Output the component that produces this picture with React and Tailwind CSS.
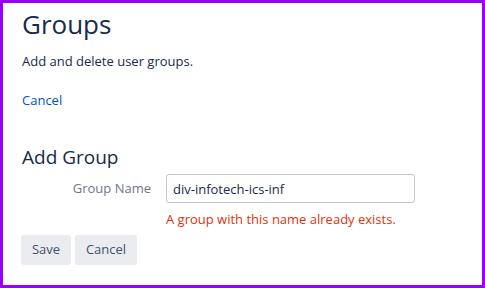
export default function App() {
  const font = { fontFamily: '"Open Sans", "Noto Sans", sans-serif' };
  return (
    <div
      className="w-[485px] h-[288px] border-[3px] border-[#9900ff] bg-white box-border overflow-hidden pl-[19px] text-[#172b4d]"
      style={font}
    >
      <h1 className="text-[26px] leading-[32px] mt-[5px] text-[#172b4d] font-normal">Groups</h1>
      <p className="text-[13px] leading-[20px] mt-[11px]">Add and delete user groups.</p>
      <a className="block text-[13px] leading-[20px] mt-[19px] text-[#0052cc]">Cancel</a>
      <h2 className="text-[19px] leading-[24px] mt-[35px] font-normal">Add Group</h2>
      <div className="flex mt-[5px]">
        <label className="w-[129px] text-right text-[13px] text-[#6b778c] leading-[29px]">Group Name</label>
        <div className="ml-[15px]">
          <input
            className="w-[249px] h-[29px] border border-[#c1c7d0] rounded-[3px] px-[6px] text-[13px] text-[#172b4d] outline-none"
            style={font}
            defaultValue="div-infotech-ics-inf"
            readOnly
          />
          <div className="text-[13px] leading-[20px] mt-[6px] text-[#de350b]">A group with this name already exists.</div>
        </div>
      </div>
      <div className="flex gap-[4px] mt-[6px] -ml-[1px]">
        <button className="h-[30px] w-[50px] bg-[#ebecf0] rounded-[3px] text-[13px] text-[#42526e]" style={font}>Save</button>
        <button className="h-[30px] w-[62px] bg-[#ebecf0] rounded-[3px] text-[13px] text-[#42526e]" style={font}>Cancel</button>
      </div>
    </div>
  );
}
